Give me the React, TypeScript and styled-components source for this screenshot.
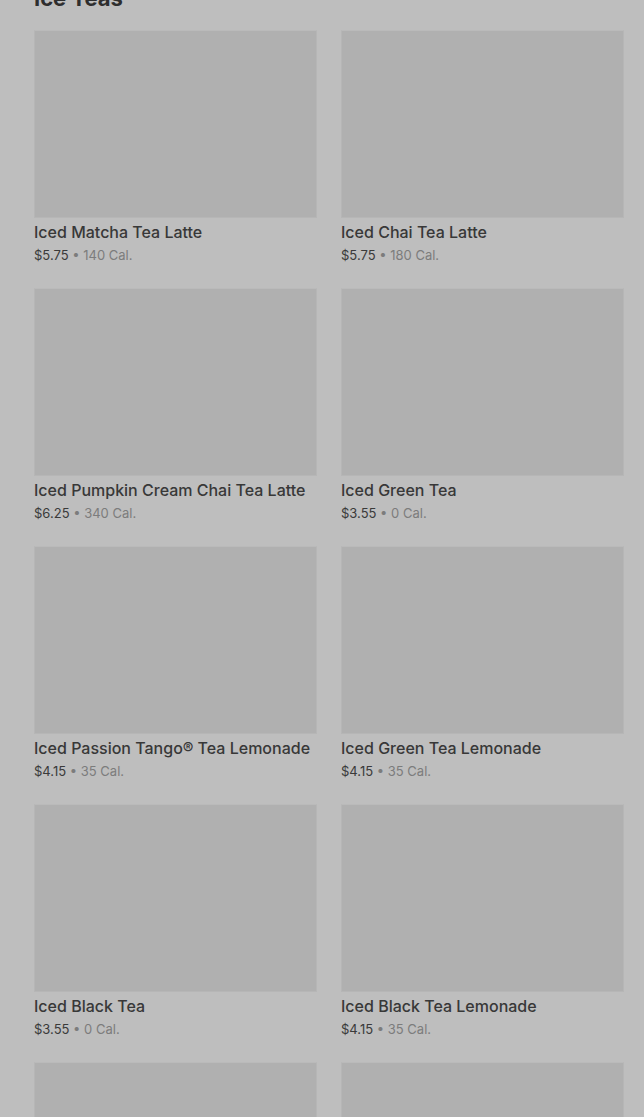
import React from 'react';
import styled, { createGlobalStyle } from 'styled-components';

const GlobalStyle = createGlobalStyle`
  html, body {
    margin: 0;
    padding: 0;
    background: #bebebe;
    font-family: Inter, "Noto Sans", "Liberation Sans", sans-serif;
    overflow: hidden;
  }
`;

interface Item {
  name: string;
  price: string;
  cal: string;
}

const items: Item[] = [
  { name: 'Iced Matcha Tea Latte', price: '$5.75', cal: '140 Cal.' },
  { name: 'Iced Chai Tea Latte', price: '$5.75', cal: '180 Cal.' },
  { name: 'Iced Pumpkin Cream Chai Tea Latte', price: '$6.25', cal: '340 Cal.' },
  { name: 'Iced Green Tea', price: '$3.55', cal: '0 Cal.' },
  { name: 'Iced Passion Tango® Tea Lemonade', price: '$4.15', cal: '35 Cal.' },
  { name: 'Iced Green Tea Lemonade', price: '$4.15', cal: '35 Cal.' },
  { name: 'Iced Black Tea', price: '$3.55', cal: '0 Cal.' },
  { name: 'Iced Black Tea Lemonade', price: '$4.15', cal: '35 Cal.' },
  { name: '', price: '', cal: '' },
  { name: '', price: '', cal: '' },
];

const App = () => {
  return (
    <Page>
      <GlobalStyle />
      <Heading>Ice Teas</Heading>
      <Grid>
        {items.map((item, i) => (
          <Card key={i}>
            <Thumb />
            {item.name && (
              <>
                <Title>{item.name}</Title>
                <Meta>
                  <Price>{item.price}</Price>
                  <Cal> • {item.cal}</Cal>
                </Meta>
              </>
            )}
          </Card>
        ))}
      </Grid>
    </Page>
  );
};
export default App;

const Page = styled.div`
  width: 644px;
  height: 1117px;
  overflow: hidden;
  padding: 0 20px 0 34px;
  box-sizing: border-box;
`;
const Heading = styled.h2`
  margin: -16px 0 0;
  height: 46px;
  font-size: 22px;
  line-height: 28px;
  font-weight: 700;
  color: #2e2e2e;
`;
const Grid = styled.div`
  display: grid;
  grid-template-columns: 283px 283px;
  column-gap: 24px;
  row-gap: 24px;
`;
const Card = styled.div`
  display: flex;
  flex-direction: column;
  height: 234px;
`;
const Thumb = styled.div`
  height: 188px;
  background: #b0b0b0;
  border: 1px solid #b6b6b6;
  border-top-color: #bababa;
  box-sizing: border-box;
`;
const Title = styled.div`
  margin-top: 3px;
  font-size: 16px;
  line-height: 22px;
  font-weight: 500;
  color: #383838;
  white-space: nowrap;
`;
const Meta = styled.div`
  margin-top: 3px;
  font-size: 13px;
  line-height: 18px;
`;
const Price = styled.span`
  color: #3a3a3a;
`;
const Cal = styled.span`
  color: #7c7c7c;
`;
